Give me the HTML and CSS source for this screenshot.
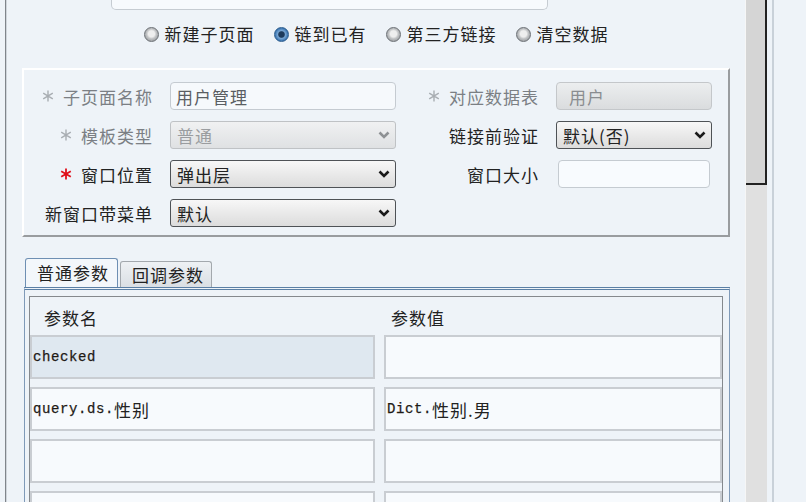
FILE: index.html
```html
<!DOCTYPE html>
<html lang="zh-CN">
<head>
<meta charset="utf-8">
<title>子页面设置</title>
<link rel="stylesheet" href="styles.css">
</head>
<body>
<div class="page">
  <div class="edge"></div>
  <div class="main">
    <div class="topbox"></div>
    <div class="radios">
      <span class="radio"><span class="dot"></span>新建子页面</span>
      <span class="radio"><span class="dot on"></span>链到已有</span>
      <span class="radio"><span class="dot"></span>第三方链接</span>
      <span class="radio"><span class="dot"></span>清空数据</span>
    </div>
    <div class="form">
      <div class="lbl dim"><svg class="ast" viewBox="0 0 12 12"><path d="M6 0.5V11.5M1.2 3.2L10.8 8.8M1.2 8.8L10.8 3.2"/></svg>子页面名称</div>
      <div class="inp">用户管理</div>
      <div class="lbl dim"><svg class="ast" viewBox="0 0 12 12"><path d="M6 0.5V11.5M1.2 3.2L10.8 8.8M1.2 8.8L10.8 3.2"/></svg>对应数据表</div>
      <div class="inp ro">用户</div>

      <div class="lbl dim"><svg class="ast" viewBox="0 0 12 12"><path d="M6 0.5V11.5M1.2 3.2L10.8 8.8M1.2 8.8L10.8 3.2"/></svg>模板类型</div>
      <div class="sel dis"><span>普通</span><svg class="chev" viewBox="0 0 12 8"><path d="M1.5 1.5L6 6L10.5 1.5"/></svg></div>
      <div class="lbl">链接前验证</div>
      <div class="sel"><span>默认(否)</span><svg class="chev" viewBox="0 0 12 8"><path d="M1.5 1.5L6 6L10.5 1.5"/></svg></div>

      <div class="lbl"><svg class="ast red" viewBox="0 0 12 12"><path d="M6 0.5V11.5M1.2 3.2L10.8 8.8M1.2 8.8L10.8 3.2"/></svg>窗口位置</div>
      <div class="sel"><span>弹出层</span><svg class="chev" viewBox="0 0 12 8"><path d="M1.5 1.5L6 6L10.5 1.5"/></svg></div>
      <div class="lbl">窗口大小</div>
      <div class="inp blank"></div>

      <div class="lbl">新窗口带菜单</div>
      <div class="sel"><span>默认</span><svg class="chev" viewBox="0 0 12 8"><path d="M1.5 1.5L6 6L10.5 1.5"/></svg></div>
    </div>
    <div class="tabs">
      <div class="tab active">普通参数</div>
      <div class="tab">回调参数</div>
    </div>
    <div class="tabpanel">
      <div class="frame">
        <div class="th">参数名</div>
        <div class="th">参数值</div>
        <div class="cell picked"><span class="mono">checked</span></div>
        <div class="cell"></div>
        <div class="cell"><span class="mono">query.ds.</span>性别</div>
        <div class="cell"><span class="mono">Dict.</span>性别.男</div>
        <div class="cell"></div>
        <div class="cell"></div>
        <div class="cell"></div>
        <div class="cell"></div>
      </div>
    </div>
  </div>
  <div class="scroll"><div class="thumb"></div></div>
  <div class="rline"></div>
</div>
</body>
</html>
```

FILE: styles.css
```css
* { box-sizing: border-box; }
html, body {
  margin: 0;
  padding: 0;
  background: #eef3f8;
  font-family: "Noto Sans CJK SC", "Noto Sans", sans-serif;
  font-size: 17px;
  color: #222;
}
.page {
  display: flex;
  width: 806px;
  height: 502px;
  overflow: hidden;
}
.edge {
  flex: 0 0 8px;
  background: linear-gradient(to right, #eef3f8 0 5px, #80858b 5px 6px, #cfd5db 6px 7px, #eef3f8 7px);
}
.main {
  flex: 0 0 737px;
  padding: 0 15px 0 14px;
}
.topbox {
  margin-left: 89px;
  width: 437px;
  height: 10px;
  border: 1px solid #c6ccd2;
  border-top: none;
  border-radius: 0 0 5px 5px;
  background: #f7fafd;
}
.radios {
  display: flex;
  justify-content: center;
  gap: 19px;
  margin-top: 14px;
  height: 20px;
  align-items: center;
  letter-spacing: 1px;
}
.radio {
  display: flex;
  align-items: center;
  gap: 6px;
  line-height: 20px;
  white-space: nowrap;
}
.dot {
  width: 15px;
  height: 15px;
  border-radius: 50%;
  border: 1px solid #6c7075;
  background: radial-gradient(circle at 50% 45%, #eeeeee 0 32%, #c2c4c6 50%, #9a9da0 80%, #85888b);
  flex: none;
}
.dot.on {
  border-color: #2c5d8e;
  background: radial-gradient(circle, #1c3a5c 0 30%, #78a6d4 42%, #3a74b0 70%, #2a5d92);
}
.form {
  margin-top: 24px;
  width: 708px;
  height: 169px;
  border: 2px solid;
  border-color: #ffffff #999c9f #999c9f #ffffff;
  display: grid;
  grid-template-columns: 146px 226px 160px 156px;
  grid-auto-rows: 28px;
  row-gap: 11px;
  padding-top: 12px;
  align-content: start;
}
.lbl {
  display: flex;
  align-items: center;
  justify-content: flex-end;
  padding-right: 17px;
  letter-spacing: 1px;
  white-space: nowrap;
}
.lbl.dim { color: #7b7f84; }
.ast {
  width: 12px;
  height: 12px;
  margin-right: 9px;
  stroke: #a8adb2;
  stroke-width: 1.4;
  fill: none;
}
.ast.red { stroke: #e0101a; stroke-width: 1.8; }
.inp {
  border: 1px solid #c5cbd1;
  border-radius: 4px;
  background: #f6f9fc;
  color: #5a5e63;
  padding-left: 5px;
  display: flex;
  align-items: center;
  letter-spacing: 1px;
}
.inp.ro {
  background: linear-gradient(#eceeef, #dadcde);
  border-color: #c4c7ca;
  color: #8a8d90;
  padding-left: 12px;
}
.inp.blank {
  margin: 0 2px;
  background: #f8fbfe;
}
.sel {
  border: 1px solid #4e5256;
  border-radius: 3px;
  background: linear-gradient(#f7f7f7, #dcdcdc);
  display: flex;
  align-items: center;
  justify-content: space-between;
  padding: 0 5px 0 6px;
  letter-spacing: 1px;
}
.sel.dis {
  border-color: #bfc2c5;
  background: linear-gradient(#f0f1f2, #dfe1e3);
  color: #9a9da0;
}
.chev {
  width: 12px;
  height: 8px;
  fill: none;
  stroke: #1a1a1a;
  stroke-width: 2.6;
}
.sel.dis .chev { stroke: #8e9194; }
.tabs {
  margin-top: 21px;
  display: flex;
  align-items: flex-end;
  gap: 2px;
  padding-left: 3px;
  height: 29px;
}
.tab {
  height: 26px;
  width: 92px;
  padding: 0 0 0 11px;
  border: 1px solid #a3a8ad;
  border-bottom: none;
  border-radius: 3px 3px 0 0;
  background: linear-gradient(#eef1f4, #dadfe4);
  line-height: 25px;
  letter-spacing: 1px;
  white-space: nowrap;
}
.tab.active {
  height: 29px;
  width: 93px;
  border-color: #6e8fb3;
  background: #f3f7fb;
  line-height: 28px;
}
.tabpanel {
  margin-left: 2px;
  width: 706px;
  height: 230px;
  border: 1px solid #7f9ab8;
  border-top: 3px double #5a7fa5;
  padding: 6px 6px 0 4px;
}
.frame {
  border: 1px solid #85898d;
  border-bottom: none;
  height: 220px;
  display: grid;
  grid-template-columns: 345px 338px;
  column-gap: 9px;
  grid-template-rows: 30px;
  grid-auto-rows: 44px;
  row-gap: 8px;
  align-content: start;
}
.th {
  display: flex;
  align-items: center;
  padding-left: 14px;
  padding-top: 10px;
  letter-spacing: 1px;
}
.th + .th { padding-left: 7px; }
.cell {
  border: 2px solid #c9cdd2;
  background: #f7fafd;
  display: flex;
  align-items: center;
  padding-left: 1px;
  letter-spacing: 1px;
  white-space: nowrap;
}
.cell.picked { background: #dfe8f0; }
.mono {
  font-family: "Liberation Mono", monospace;
  font-size: 14px;
  letter-spacing: 0.6px;
  color: #1e1a16;
  -webkit-text-stroke: 0.25px #1e1a16;
}
.scroll {
  flex: 0 0 22px;
  background: #e0e0e0;
  border-left: 1px solid #f6f6f6;
}
.thumb {
  height: 185px;
  background: #d5d5d5;
  border-right: 2px solid #222;
  border-bottom: 2px solid #222;
}
.rline {
  flex: 0 0 8px;
  background: linear-gradient(to right, #eef3f8 0 5px, #c9d1d9 5px 7px, #eef3f8 7px);
}
```
